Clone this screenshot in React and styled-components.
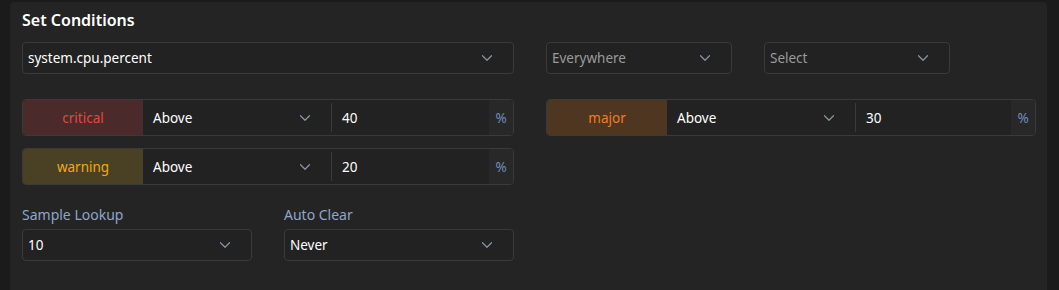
import React from 'react';
import styled, {createGlobalStyle, css} from 'styled-components';
import {ChevronDown} from 'lucide-react';

const GlobalStyle = createGlobalStyle`
  html, body {
    margin: 0;
    background: #1b1b1b;
    font-family: "Noto Sans", "Open Sans", sans-serif;
  }
`

const Page = styled.div`
  width: 1059px;
  height: 290px;
  padding: 2px 12px 0 10px;
  box-sizing: border-box;
`

const Panel = styled.div`
  height: 288px;
  box-sizing: border-box;
  background: #242424;
  border-radius: 4px 4px 0 0;
  padding: 8px 11px 0 12px;
`

const Title = styled.h3`
  margin: 0 0 12px 0;
  font-size: 16px;
  font-weight: 600;
  line-height: 20px;
  color: #ffffff;
`

const Grid = styled.div`
  display: grid;
  grid-template-columns: 492px 490px;
  column-gap: 32px;
`

const Pair = styled.div`
  display: flex;
  gap: 32px;
`

const Stack = styled.div`
  display: flex;
  flex-direction: column;
  gap: 12px;
  margin-top: 25px;
`

const Field = styled.div`
  display: flex;
  flex-direction: column;
  width: ${props => props.width || 'auto'};
`

const FieldLabel = styled.label`
  font-size: 14px;
  line-height: 18px;
  color: #8ea6cc;
  margin-bottom: 5px;
`

const SelectBox = styled.div`
  width: ${props => props.width || '100%'};
  height: 32px;
  box-sizing: border-box;
  display: flex;
  align-items: center;
  justify-content: space-between;
  padding: 0 17px 0 5px;
  border: 1px solid #3a3a3a;
  border-radius: 4px;
  background: #222222;
  font-size: 13.5px;
  color: ${props => props.placeholder ? '#9a9a9a' : '#ffffff'};

  svg {
    color: #8b93a3;
    flex-shrink: 0;
  }
`

const levels = {
    critical: {bg: '#4a2a2a', fg: '#e4473f'},
    major: {bg: '#4e3620', fg: '#f17e22'},
    warning: {bg: '#4a4023', fg: '#f1a81c'},
}

const ThresholdRow = styled.div`
  height: 37px;
  box-sizing: border-box;
  display: flex;
  border: 1px solid #3a3a3a;
  border-radius: 4px;
  overflow: hidden;
  background: #222222;
  font-size: 13.5px;
`

const Level = styled.div`
  width: 120px;
  display: flex;
  align-items: center;
  justify-content: center;
  ${props => css`
    background: ${levels[props.level].bg};
    color: ${levels[props.level].fg};
  `}
`

const Operator = styled.div`
  flex: 0 0 189px;
  box-sizing: border-box;
  display: flex;
  align-items: center;
  justify-content: space-between;
  padding: 0 17px 0 10px;
  color: #ffffff;
  border-right: 1px solid #3a3a3a;
  margin: 3px 0;

  svg {
    color: #8b93a3;
  }
`

const Value = styled.div`
  flex: 1;
  display: flex;
  align-items: center;
  padding-left: 10px;
  color: #ffffff;
`

const Unit = styled.div`
  width: 24px;
  display: flex;
  align-items: center;
  justify-content: center;
  background: #282828;
  color: #6f8dc0;
`

const Bottom = styled.div`
  display: flex;
  gap: 32px;
  margin-top: 21px;
`

const Chevron = () => <ChevronDown size={18} strokeWidth={1.6}/>

const Threshold = ({level, value}) => (
    <ThresholdRow>
        <Level level={level}>{level}</Level>
        <Operator>Above <Chevron/></Operator>
        <Value>{value}</Value>
        <Unit>%</Unit>
    </ThresholdRow>
)

const App = () => {
    return (
        <Page>
            <GlobalStyle/>
            <Panel>
                <Title>Set Conditions</Title>
                <Grid>
                    <SelectBox>system.cpu.percent <Chevron/></SelectBox>
                    <Pair>
                        <SelectBox width={'186px'} placeholder="1">Everywhere <Chevron/></SelectBox>
                        <SelectBox width={'186px'} placeholder="1">Select <Chevron/></SelectBox>
                    </Pair>
                </Grid>
                <Grid>
                    <Stack>
                        <Threshold level="critical" value="40"/>
                        <Threshold level="warning" value="20"/>
                    </Stack>
                    <Stack>
                        <Threshold level="major" value="30"/>
                    </Stack>
                </Grid>
                <Bottom>
                    <Field width={'230px'}>
                        <FieldLabel>Sample Lookup</FieldLabel>
                        <SelectBox>10 <Chevron/></SelectBox>
                    </Field>
                    <Field width={'230px'}>
                        <FieldLabel>Auto Clear</FieldLabel>
                        <SelectBox>Never <Chevron/></SelectBox>
                    </Field>
                </Bottom>
            </Panel>
        </Page>
    );
};

export default App;
